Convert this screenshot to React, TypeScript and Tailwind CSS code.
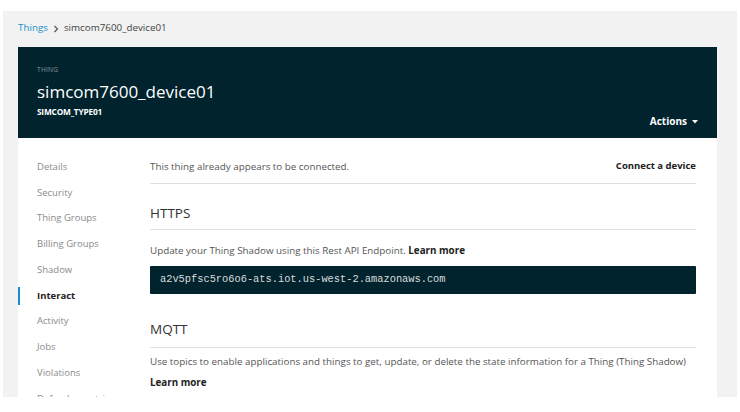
import React from "react";

const navItems = [
  "Details",
  "Security",
  "Thing Groups",
  "Billing Groups",
  "Shadow",
  "Interact",
  "Activity",
  "Jobs",
  "Violations",
  "Defender metrics",
];

export default function App() {
  return (
    <div
      className="w-[740px] h-[412px] bg-white pt-[11px] px-[3px] overflow-hidden"
      style={{ fontFamily: '"Open Sans", "Noto Sans", sans-serif' }}
    >
      <div className="bg-[#f2f2f2] h-[386px] pl-[15px] pr-[20px] overflow-hidden flex flex-col">
        {/* breadcrumb */}
        <div className="h-[36px] flex items-center gap-[5px] text-[9.8px] pb-[1px] shrink-0">
          <span className="text-[#1b8fc4]">Things</span>
          <svg width="6" height="8" viewBox="0 0 6 8" className="mt-[1px]">
            <path d="M1.5 1 L4.5 4 L1.5 7" fill="none" stroke="#555" strokeWidth="1.2" />
          </svg>
          <span className="text-[#444]">simcom7600_device01</span>
        </div>

        {/* header */}
        <div className="h-[91px] bg-[#00232e] shrink-0 pl-[19px] pr-[19px] flex">
          <div className="flex flex-col flex-1">
            <div className="mt-[19px] text-[6.5px] leading-[8px] text-[#8a9aa0] tracking-[0.3px]">THING</div>
            <div className="mt-[7px] text-[17px] leading-[22px] text-white">simcom7600_device01</div>
            <div className="mt-[4px] text-[8.3px] leading-[10px] font-bold text-white tracking-[-0.2px]">SIMCOM_TYPE01</div>
          </div>
          <div className="flex items-end pb-[9px]">
            <div className="flex items-center gap-[5px] text-[10px] font-bold text-white">
              <span>Actions</span>
              <svg width="6" height="4" viewBox="0 0 6 4">
                <path d="M0 0 L6 0 L3 3.5 Z" fill="#fff" />
              </svg>
            </div>
          </div>
        </div>

        {/* content */}
        <div className="flex-1 bg-white flex overflow-hidden">
          <div className="w-[132px] shrink-0 pt-[16px] flex flex-col">
            {navItems.map((item) => {
              const active = item === "Interact";
              return (
                <div key={item} className="h-[25.75px] shrink-0 flex items-center relative">
                  {active && (
                    <div className="absolute left-0 top-[4px] w-[2px] h-[18px] bg-[#1b8fc4]" />
                  )}
                  <span
                    className={
                      "pl-[19px] text-[9.5px] " +
                      (active ? "font-bold text-[#222]" : "text-[#8a8a8a]")
                    }
                  >
                    {item}
                  </span>
                </div>
              );
            })}
          </div>

          <div className="w-[546px] shrink-0 flex flex-col">
            <div className="pt-[21px] pb-[8px] border-b border-[#e0e0e0] flex justify-between items-center">
              <span className="text-[9.8px] leading-[16px] text-[#555]">
                This thing already appears to be connected.
              </span>
              <span className="text-[9.5px] leading-[16px] font-bold text-[#222] -mt-[3px]">
                Connect a device
              </span>
            </div>

            <div className="mt-[20px] pb-[7px] border-b border-[#e0e0e0] text-[13.5px] leading-[18px] text-[#333]">
              HTTPS
            </div>

            <div className="mt-[13px] text-[9.8px] leading-[16px] text-[#555]">
              Update your Thing Shadow using this Rest API Endpoint.{" "}
              <span className="font-bold text-[#222]">Learn more</span>
            </div>

            <div className="mt-[7px] h-[28px] bg-[#00232e] rounded-[1px] flex items-center pl-[10px]">
              <span
                className="text-[10.35px] text-[#dcdcdc]"
                style={{ fontFamily: '"Liberation Mono", "DejaVu Sans Mono", monospace' }}
              >
                a2v5pfsc5ro6o6-ats.iot.us-west-2.amazonaws.com
              </span>
            </div>

            <div className="mt-[26px] pb-[9px] border-b border-[#e0e0e0] text-[13.5px] leading-[18px] text-[#333]">
              MQTT
            </div>

            <div className="mt-[6px] text-[9.8px] leading-[16px] text-[#555] whitespace-nowrap">
              Use topics to enable applications and things to get, update, or delete the state information for a Thing (Thing Shadow)
            </div>
            <div className="mt-[5px] text-[9.8px] leading-[16px] font-bold text-[#222]">
              Learn more
            </div>
          </div>
        </div>
      </div>
    </div>
  );
}
